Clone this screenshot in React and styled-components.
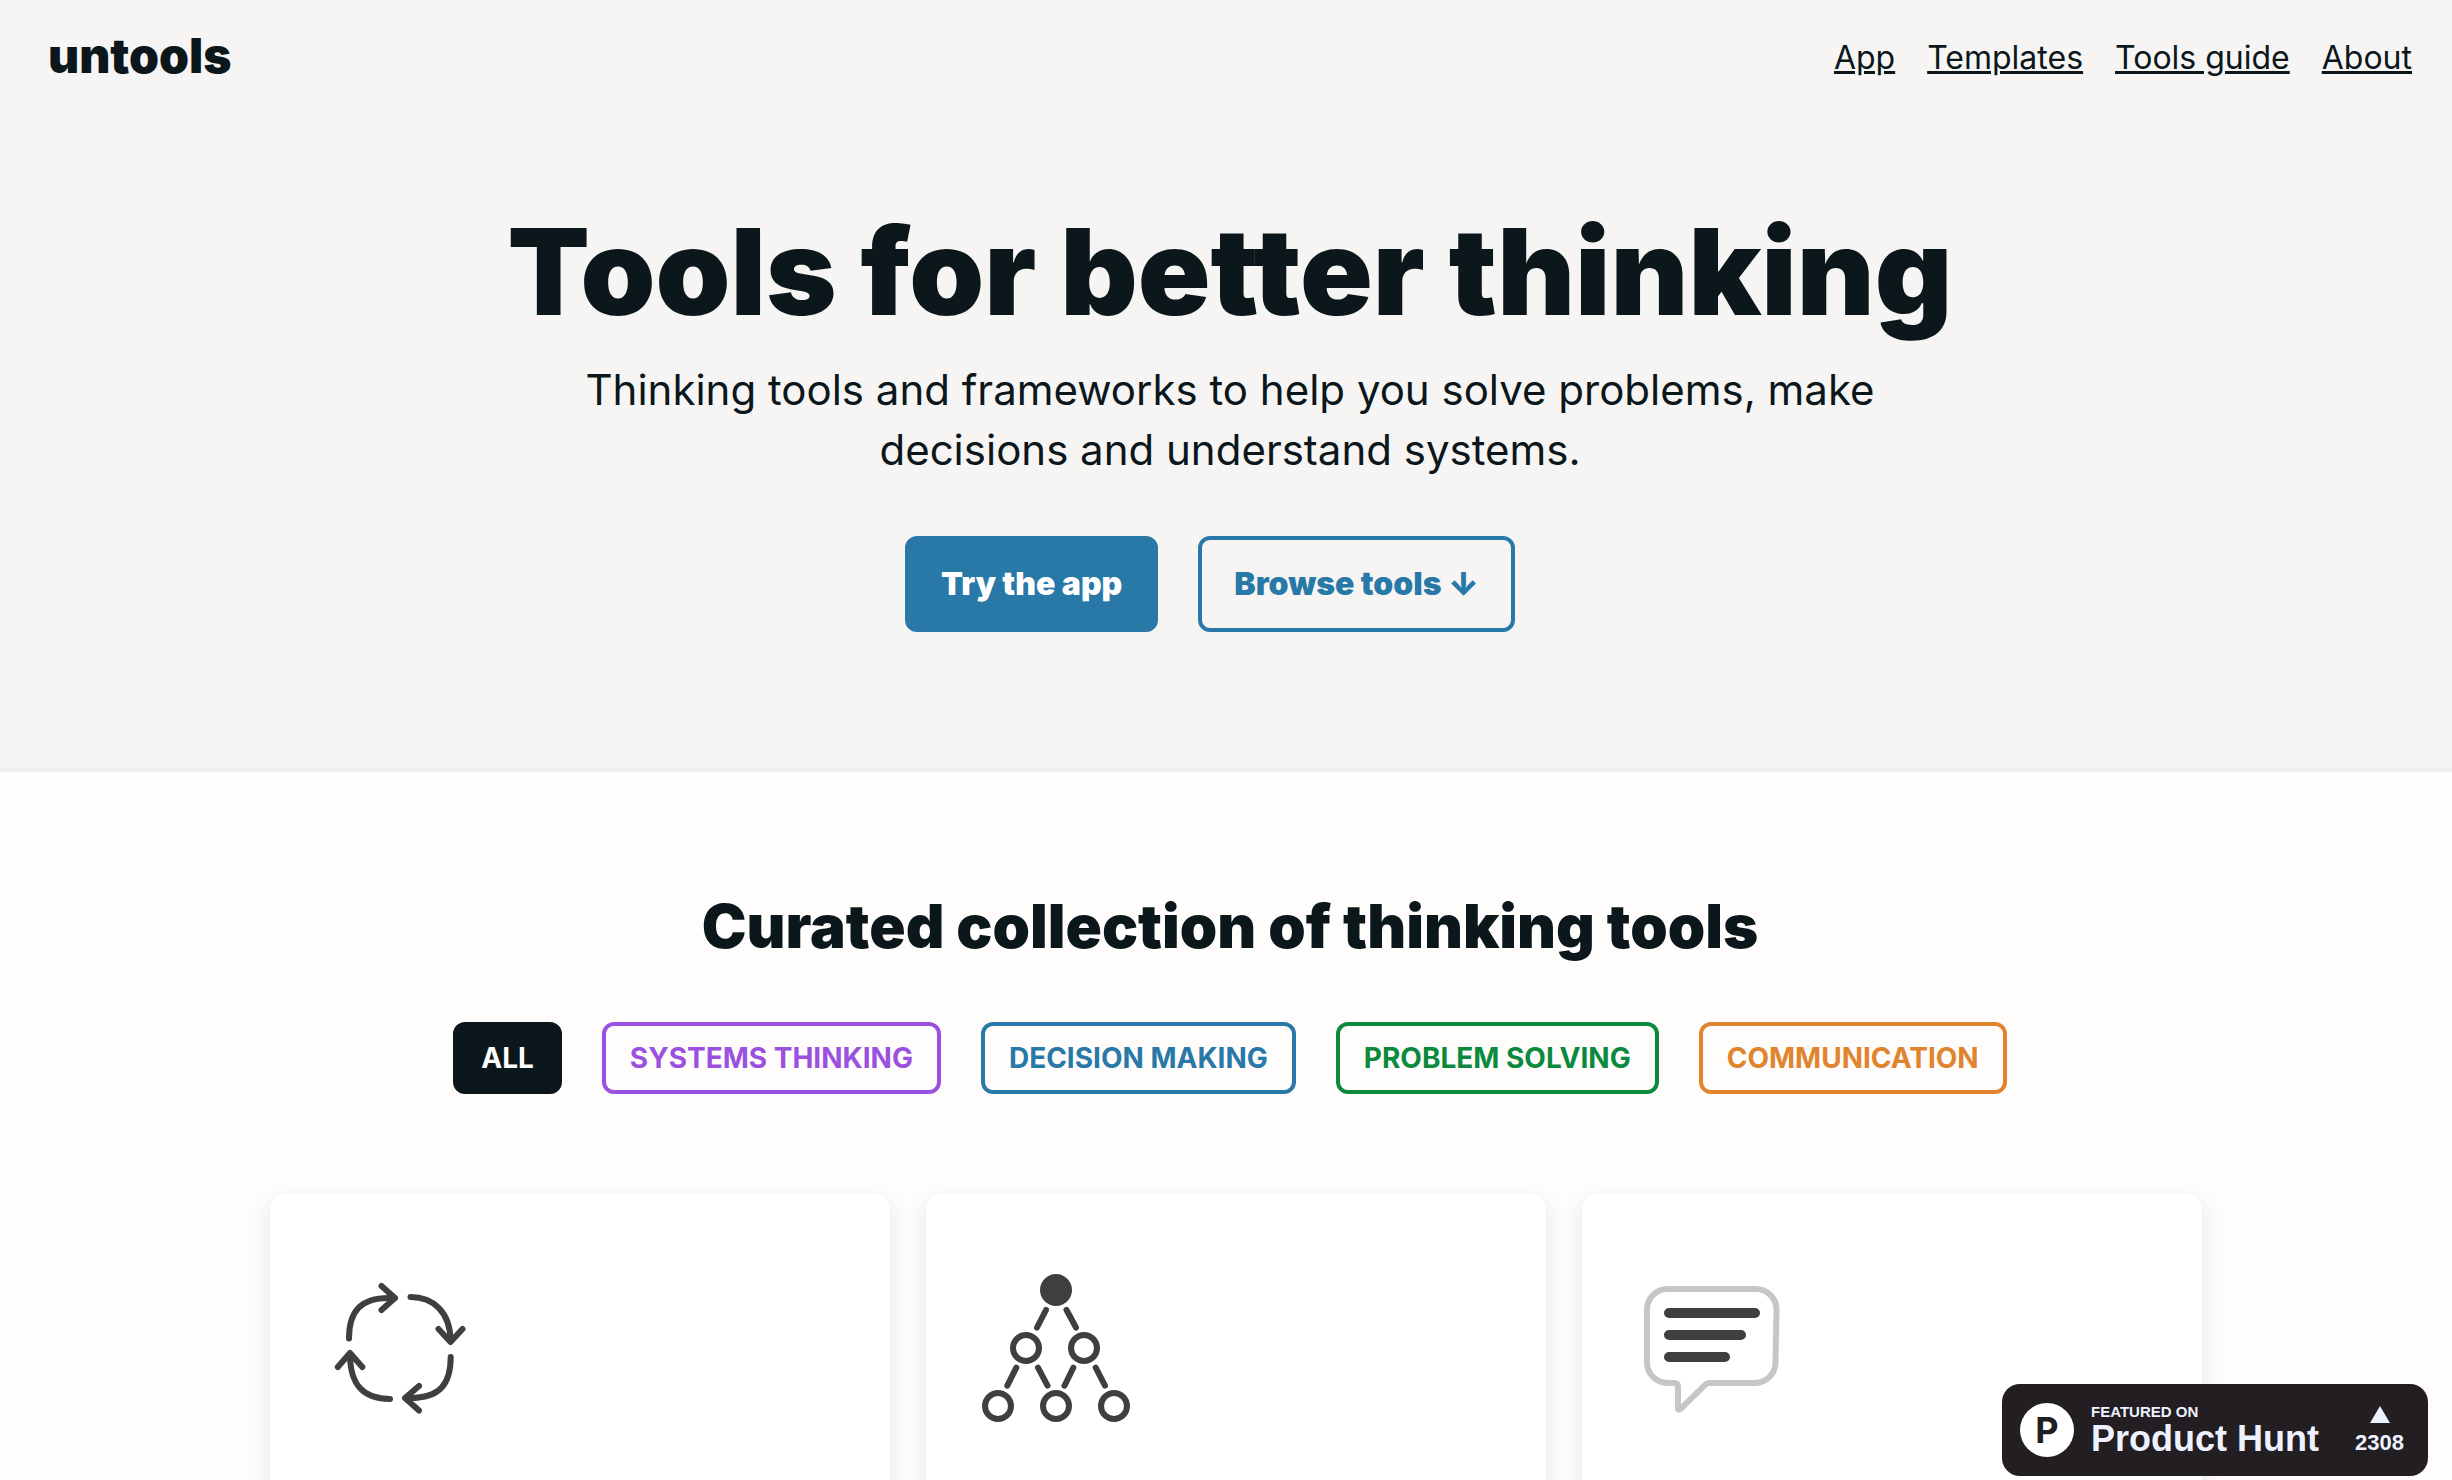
import { useState } from 'react'
import styled, { createGlobalStyle } from 'styled-components'

const ink = '#0b171b'
const blue = '#2878a8'

const GlobalStyle = createGlobalStyle`
  *, *::before, *::after {
    box-sizing: border-box;
  }

  html {
    scrollbar-width: none;
  }

  body {
    margin: 0;
    background-color: #fffdfc;
    color: ${ink};
    font-family: Inter, "Liberation Sans", sans-serif;
  }
`

const Hero = styled.header`
  padding: 0 40px 136px 48px;
  background-color: #f7f5f4;
  border-bottom: 4px solid #efeeed;
`

const Nav = styled.nav`
  display: flex;
  align-items: center;
  justify-content: space-between;
  height: 110px;
`

const Logo = styled.a`
  color: ${ink};
  font-size: 48px;
  font-weight: 900;
  text-decoration: none;
`

const NavLinks = styled.div`
  display: flex;
  gap: 32px;
  padding-top: 6px;
`

const NavLink = styled.a`
  color: ${ink};
  font-size: 32px;
  line-height: 48px;
`

const HeroContent = styled.div`
  display: flex;
  flex-direction: column;
  align-items: center;
  padding-top: 90px;
  text-align: center;
`

const Title = styled.h1`
  margin: 0;
  font-size: 120px;
  font-weight: 900;
  line-height: 144px;
`

const Lead = styled.p`
  max-width: 1320px;
  margin: 16px 0 56px;
  font-size: 42px;
  line-height: 60px;
`

const Actions = styled.div`
  display: flex;
  gap: 40px;
  padding-right: 40px;
`

const Action = styled.a`
  padding: 24px 32px;
  border: 4px solid ${blue};
  border-radius: 12px;
  background-color: ${props => props.$filled ? blue : 'transparent'};
  color: ${props => props.$filled ? '#fff' : blue};
  font-size: 32px;
  font-weight: 900;
  line-height: 40px;
  text-decoration: none;
`

const Collection = styled.main`
  display: flex;
  flex-direction: column;
  align-items: center;
  padding: 118px 40px 0 48px;
`

const Heading = styled.h2`
  margin: 0;
  font-size: 60px;
  font-weight: 900;
  line-height: 72px;
  text-align: center;
`

const Filters = styled.div`
  display: flex;
  flex-wrap: wrap;
  justify-content: center;
  gap: 40px;
  margin: 60px 0 100px;
`

const Filter = styled.button`
  padding: 16px 24px;
  border: 4px solid ${props => props.$color};
  border-radius: 12px;
  background-color: ${props => props.$active ? props.$color : 'transparent'};
  color: ${props => props.$active ? '#fff' : props.$color};
  font-family: inherit;
  font-size: 28px;
  font-weight: 700;
  line-height: 32px;
  text-transform: uppercase;
  cursor: pointer;
`

const Cards = styled.div`
  display: grid;
  grid-template-columns: repeat(3, 1fr);
  gap: 36px;
  width: 100%;
  max-width: 1944px;
  padding-left: 12px;
`

const Card = styled.article`
  min-height: 480px;
  padding: 72px 48px;
  border-radius: 16px;
  background-color: #fff;
  box-shadow: 0 8px 24px rgba(0, 0, 0, 0.1);
`

const Icon = styled.svg`
  display: block;
  width: 160px;
  height: 160px;
  fill: none;
  stroke: #3e3f41;
  stroke-width: 6;
  stroke-linecap: round;
  stroke-linejoin: round;
`

const Badge = styled.a`
  position: fixed;
  right: 24px;
  bottom: 4px;
  display: flex;
  align-items: center;
  width: 426px;
  height: 92px;
  padding: 0 24px 0 18px;
  border-radius: 18px;
  background-color: #221e21;
  color: #eef1ff;
  font-family: "Liberation Sans", Arial, sans-serif;
  font-weight: bold;
  text-decoration: none;
`

const BadgeMark = styled.span`
  display: grid;
  place-items: center;
  width: 54px;
  height: 54px;
  margin-right: 17px;
  border-radius: 50%;
  background-color: #fff;
  color: #221e21;
  font-family: Inter, sans-serif;
  font-size: 36px;
  font-weight: 700;
  line-height: 54px;
`

const BadgeText = styled.span`
  display: flex;
  flex: 1;
  flex-direction: column;
`

const BadgeLabel = styled.span`
  font-size: 15px;
  line-height: 18px;
`

const BadgeName = styled.span`
  font-size: 36px;
  line-height: 36px;
`

const Votes = styled.span`
  display: flex;
  flex-direction: column;
  align-items: center;
  gap: 8px;
  font-size: 22px;
  line-height: 24px;
`

const categories = [
  { name: 'All', color: ink },
  { name: 'Systems thinking', color: '#9b51e0' },
  { name: 'Decision making', color: blue },
  { name: 'Problem solving', color: '#0b8a3e' },
  { name: 'Communication', color: '#e0842e' }
]

function CycleIcon () {
  return (
    <Icon viewBox="0 0 160 160" aria-hidden="true">
      <path d="M31 72.5C31 46 42 32 71 32H76" />
      <path d="M63.5 20L77 32L63.5 44" />
      <path d="M92.5 31C115 31 132.5 46 132.5 75" />
      <path d="M120.5 63L132.5 76L144.5 63" />
      <path d="M132.7 91C132.7 118 122 132 92 132H88" />
      <path d="M101 120L87 132L101 144.5" />
      <path d="M72 133C45 133 32 119 32 88" />
      <path d="M19.8 101L32 87L44.3 101" />
    </Icon>
  )
}

function TreeIcon () {
  return (
    <Icon viewBox="0 0 160 160" aria-hidden="true">
      <circle cx="82" cy="24" r="13" fill="#3e3f41" />
      <circle cx="52" cy="82" r="13" />
      <circle cx="110" cy="82" r="13" />
      <circle cx="24" cy="140" r="13" />
      <circle cx="82" cy="140" r="13" />
      <circle cx="140" cy="140" r="13" />
      <path d="M72 44L63 61.5M92.5 44L102 61.5" />
      <path d="M42.3 101.7L33.3 119.7M64 101.7L73.5 119.7" />
      <path d="M99.3 101.7L90.5 119.7M121.7 101.7L131 119.7" />
    </Icon>
  )
}

function MessageIcon () {
  return (
    <Icon viewBox="0 0 160 160" aria-hidden="true">
      <path
        stroke="#c6c6c6"
        d="M37.5 23H126A20.5 20.5 0 0 1 146.5 43.5L145.5 96.5A20.5 20.5 0 0 1 125 117H79Q77 117 75.5 118.5L50.5 143Q48 145 48 142V121Q48 117 44 117H37.5A20.5 20.5 0 0 1 17 96.5V43.5A20.5 20.5 0 0 1 37.5 23Z"
      />
      <path strokeWidth="10" d="M39 47H125M39 69H111M39 91H95" />
    </Icon>
  )
}

function App () {
  const [ selected, setSelected ] = useState('All')

  return (
    <>
      <GlobalStyle />
      <Hero>
        <Nav>
          <Logo href="#">untools</Logo>
          <NavLinks>
            <NavLink href="#app">App</NavLink>
            <NavLink href="#templates">Templates</NavLink>
            <NavLink href="#guide">Tools guide</NavLink>
            <NavLink href="#about">About</NavLink>
          </NavLinks>
        </Nav>
        <HeroContent>
          <Title>Tools for better thinking</Title>
          <Lead>Thinking tools and frameworks to help you solve problems, make decisions and understand systems.</Lead>
          <Actions>
            <Action href="#app" $filled>Try the app</Action>
            <Action href="#tools">Browse tools ↓</Action>
          </Actions>
        </HeroContent>
      </Hero>
      <Collection id="tools">
        <Heading>Curated collection of thinking tools</Heading>
        <Filters>
          {categories.map(({ name, color }) => (
            <Filter
              key={name}
              type="button"
              $color={color}
              $active={selected === name}
              aria-pressed={selected === name}
              onClick={() => setSelected(name)}
            >
              {name}
            </Filter>
          ))}
        </Filters>
        <Cards>
          <Card><CycleIcon /></Card>
          <Card><TreeIcon /></Card>
          <Card><MessageIcon /></Card>
        </Cards>
      </Collection>
      <Badge href="#product-hunt">
        <BadgeMark>P</BadgeMark>
        <BadgeText>
          <BadgeLabel>FEATURED ON</BadgeLabel>
          <BadgeName>Product Hunt</BadgeName>
        </BadgeText>
        <Votes>
          <svg width="20" height="17" viewBox="0 0 20 17" fill="#eef1ff" aria-hidden="true">
            <path d="M10 0L20 17H0Z" />
          </svg>
          2308
        </Votes>
      </Badge>
    </>
  )
}

export default App
